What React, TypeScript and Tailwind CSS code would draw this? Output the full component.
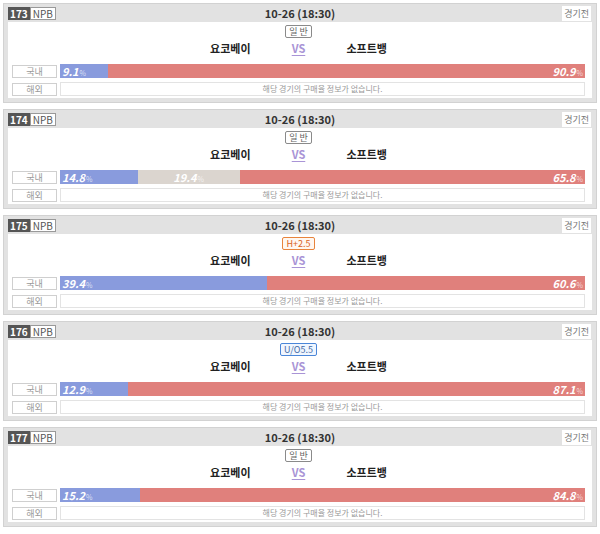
type Tag = 'normal' | 'handicap' | 'overunder';

type Game = {
    no: number;
    tag: Tag;
    tagText: string;
    home: number;
    draw?: number;
    away: number;
};

const games: Game[] = [
    { no: 173, tag: 'normal', tagText: '일 반', home: 9.1, away: 90.9 },
    { no: 174, tag: 'normal', tagText: '일 반', home: 14.8, draw: 19.4, away: 65.8 },
    { no: 175, tag: 'handicap', tagText: 'H+2.5', home: 39.4, away: 60.6 },
    { no: 176, tag: 'overunder', tagText: 'U/O5.5', home: 12.9, away: 87.1 },
    { no: 177, tag: 'normal', tagText: '일 반', home: 15.2, away: 84.8 },
];

const tagStyles: Record<Tag, string> = {
    normal: 'border-[#8a8a8a] text-[#666] bg-white',
    handicap: 'border-[#e8843c] text-[#d9621c] bg-[#fff7f0]',
    overunder: 'border-[#4a86d8] text-[#3f6aa5] bg-[#f0f6ff]',
};

function Pct({ value }: { value: number }) {
    return (
        <span className="italic font-bold text-[11px] text-white leading-none">
            {value.toFixed(1)}
            <span className="not-italic font-normal text-[7px] text-white/70 ml-[1px]">%</span>
        </span>
    );
}

function GameCard({ game }: { game: Game }) {
    return (
        <div className="h-[100px] border border-[#d2d2d2] bg-[#e2e2e2] px-[4px] pb-[4px] flex flex-col">
            {/* header */}
            <div className="h-[18px] relative flex items-center justify-center">
                <div className="absolute left-0 top-[3px] flex h-[13px] text-[10px] leading-none">
                    <span className="bg-[#555] text-white font-bold px-[2px] flex items-center">{game.no}</span>
                    <span className="bg-white text-[#555] border border-[#999] px-[2px] flex items-center">NPB</span>
                </div>
                <span className="text-[11px] font-bold text-[#333] leading-none">10-26 (18:30)</span>
                <span className="absolute right-[1px] top-[2px] h-[15px] px-[2px] bg-white text-[#777] text-[9px] leading-none flex items-center">
                    경기전
                </span>
            </div>

            {/* body */}
            <div className="flex-1 bg-white pt-[3px] pl-[4px] pr-[7px] flex flex-col">
                <div className="flex justify-center">
                    <span className={`h-[13px] px-[3px] border rounded-[2px] text-[9px] leading-none flex items-center ${tagStyles[game.tag]}`}>
                        {game.tagText}
                    </span>
                </div>

                <div className="h-[20px] flex items-center">
                    <span className="flex-1 text-right text-[11px] font-bold text-[#222]">요코베이</span>
                    <span className="w-[96px] text-center text-[11px] font-bold text-[#a994d6] underline underline-offset-2">VS</span>
                    <span className="flex-1 text-left text-[11px] font-bold text-[#222]">소프트뱅</span>
                </div>

                <div className="mt-[6px] h-[14px] flex items-center gap-[3px]">
                    <span className="w-[45px] h-[13px] border border-[#cfcfcf] text-[#999] text-[9px] leading-none flex items-center justify-center">
                        국내
                    </span>
                    <div className="flex-1 h-[14px] flex">
                        <div className="bg-[#899bdd] flex items-center pl-[2px]" style={{ width: `${game.home}%` }}>
                            <Pct value={game.home} />
                        </div>
                        {game.draw !== undefined && (
                            <div className="bg-[#dbd5cf] flex items-center justify-center" style={{ width: `${game.draw}%` }}>
                                <Pct value={game.draw} />
                            </div>
                        )}
                        <div className="bg-[#e0807c] flex-1 flex items-center justify-end pr-[2px]">
                            <Pct value={game.away} />
                        </div>
                    </div>
                </div>

                <div className="mt-[4px] h-[14px] flex items-center gap-[3px]">
                    <span className="w-[45px] h-[13px] border border-[#cfcfcf] text-[#999] text-[9px] leading-none flex items-center justify-center">
                        해외
                    </span>
                    <div className="flex-1 h-[14px] border border-[#e3e3e3] text-[#999] text-[8px] leading-none flex items-center justify-center">
                        해당 경기의 구매율 정보가 없습니다.
                    </div>
                </div>
            </div>
        </div>
    );
}

export default function App() {
    return (
        <div
            className="w-[600px] h-[534px] bg-white px-[3px] pt-[3px] flex flex-col gap-[6px]"
            style={{ fontFamily: '"Noto Sans CJK KR", "Noto Sans", sans-serif' }}
        >
            {games.map((game) => (
                <GameCard key={game.no} game={game} />
            ))}
        </div>
    );
}
